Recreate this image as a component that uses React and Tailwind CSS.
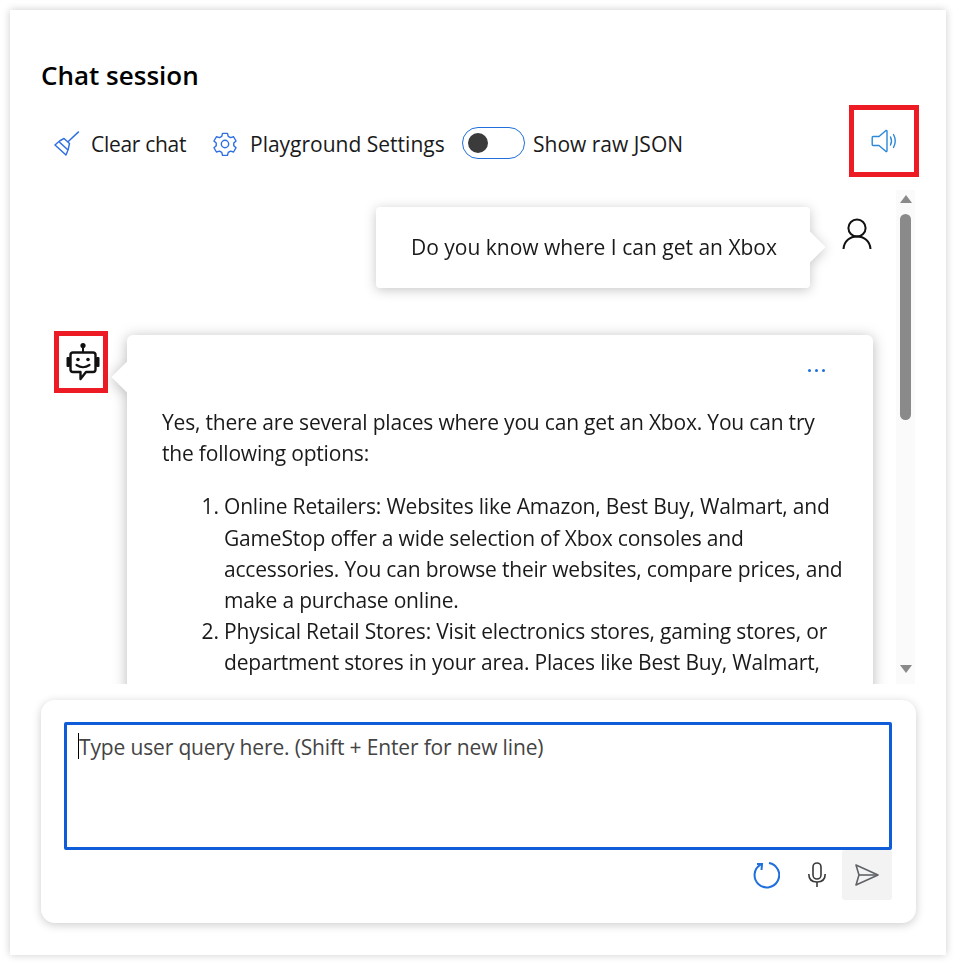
import React from 'react'

const Broom = () => (
  <svg width="26" height="26" viewBox="0 0 26 26" fill="none" stroke="#2f6fe0" strokeWidth="1.5">
    <path d="M24.8 0.6 L14 10.8" />
    <path d="M1 14 Q5 9.5 10 7.5 L15.5 12.5 Q14.5 19 12 24 Z" strokeLinejoin="round" />
    <path d="M5 10.8 L14 19" />
  </svg>
)

const Gear = () => (
  <svg width="26" height="26" viewBox="0 0 24 24" fill="none" stroke="#2f6fe0" strokeWidth="1.3" strokeLinejoin="round">
    <path d="M9.7 2.6 h4.6 l.7 2.8 2.1 1.2 2.8-.8 2.3 4-2.1 2 v2.4 l2.1 2-2.3 4-2.8-.8-2.1 1.2-.7 2.8 H9.7 l-.7-2.8-2.1-1.2-2.8.8-2.3-4 2.1-2 v-2.4 l-2.1-2 2.3-4 2.8.8 2.1-1.2 Z" transform="translate(0 -.4) scale(1 .98)" />
    <circle cx="12" cy="12" r="3.4" />
  </svg>
)

const Speaker = () => (
  <svg width="28" height="28" viewBox="0 0 28 28" fill="none" stroke="#2b88d8" strokeWidth="1.4" strokeLinejoin="round" strokeLinecap="round">
    <path d="M2 9.5 H8 L15 3.5 Q16 3.2 16 4.5 V23.5 Q16 24.8 15 24.5 L8 18.5 H2 Q1.2 18.5 1.2 17.5 V10.5 Q1.2 9.5 2 9.5 Z" />
    <path d="M19.5 10 Q21.5 14 19.5 18" />
    <path d="M22.5 7.5 Q26 14 22.5 20.5" />
  </svg>
)

const Person = () => (
  <svg width="30" height="32" viewBox="0 0 30 32" fill="none" stroke="#111" strokeWidth="2">
    <circle cx="15" cy="10" r="8.6" />
    <path d="M1.5 31 C2 23 8 18.6 15 18.6 C22 18.6 28 23 28.5 31" />
  </svg>
)

const Bot = () => (
  <svg width="34" height="40" viewBox="0 0 34 40" fill="none">
    <circle cx="17" cy="3.5" r="2.6" fill="#111" />
    <path d="M17 5 V10" stroke="#111" strokeWidth="2" />
    <rect x="0.5" y="15" width="3.5" height="10" rx="1" fill="#111" />
    <rect x="30" y="15" width="3.5" height="10" rx="1" fill="#111" />
    <path d="M7 10.5 H27 Q29.5 10.5 29.5 13 V27.5 Q29.5 30 27 30 H20 L14.5 37 V30 H7 Q4.5 30 4.5 27.5 V13 Q4.5 10.5 7 10.5 Z" fill="#fff" stroke="#111" strokeWidth="2.4" strokeLinejoin="round" />
    <circle cx="12" cy="17.5" r="1.8" fill="#111" />
    <circle cx="22" cy="17.5" r="1.8" fill="#111" />
    <path d="M10.5 23 Q17 27.5 23.5 23" stroke="#111" strokeWidth="2.2" strokeLinecap="round" />
  </svg>
)

const Refresh = () => (
  <svg width="28" height="28" viewBox="0 0 28 28" fill="none" stroke="#1f6fdc" strokeWidth="2">
    <path d="M8.5 3.6 A12.3 12.3 0 1 0 17 2" />
    <path d="M5 3 L10 3 L9.5 9" />
  </svg>
)

const Mic = () => (
  <svg width="20" height="26" viewBox="0 0 20 26" fill="none" stroke="#3a3a3a" strokeWidth="1.6">
    <rect x="6" y="1" width="8" height="16" rx="4" />
    <path d="M1.8 12 C1.8 17.5 5 20 10 20 C15 20 18.2 17.5 18.2 12" />
    <path d="M10 20 V25" />
  </svg>
)

const Send = () => (
  <svg width="24" height="22" viewBox="0 0 24 22" fill="none" stroke="#5f6368" strokeWidth="1.6" strokeLinejoin="round">
    <path d="M1 1 L23 11 L1 21 L4 11 Z" />
    <path d="M4 11 H23" />
  </svg>
)

const App = () => {
  return (
    <div className="w-[955px] h-[967px] bg-white pt-[10px] pl-[10px] font-['Open_Sans',sans-serif] text-[#1a1a1a]">
      <div className="w-[936px] h-[945px] bg-white shadow-[0_0_8px_rgba(0,0,0,0.2)] flex flex-col overflow-hidden">
        <h1 className="pl-[31px] mt-[48px] h-[34px] text-[26px] leading-[34px] font-semibold text-black">Chat session</h1>

        {/* toolbar */}
        <div className="mt-[13px] h-[72px] pl-[44px] pr-[27px] flex items-start text-[21px]">
          <div className="flex items-center h-[32px] mt-[22px]">
            <span className="flex mt-[2px]"><Broom /></span>
            <span className="ml-[11px] pt-[4px] w-[96px] tracking-[-0.3px] whitespace-nowrap">Clear chat</span>
            <span className="ml-[25px] flex mt-[2px]"><Gear /></span>
            <span className="ml-[12px] pt-[4px] w-[194px] whitespace-nowrap">Playground Settings</span>
            <div className="ml-[18px] w-[63px] h-[32px] rounded-full border border-[#1f6fdc] flex items-center pl-[5px]">
              <div className="w-[20px] h-[20px] rounded-full bg-[#3b3b3b]" />
            </div>
            <span className="ml-[8px] pt-[4px] whitespace-nowrap">Show raw JSON</span>
          </div>
          <div className="ml-auto w-[70px] h-[72px] border-[5px] border-[#ed1c24] pl-[1px] flex items-center justify-center">
            <Speaker />
          </div>
        </div>

        {/* messages */}
        <div className="mt-[13px] h-[494px] flex overflow-hidden">
          <div className="w-[886px] pt-[17px] overflow-hidden shrink-0">
            <div className="flex justify-end pr-[24px]">
              <div className="relative w-[434px] h-[81px] bg-white rounded-[4px] drop-shadow-[0_2px_6px_rgba(0,0,0,0.22)] flex items-center pl-[35px] text-[21px]">
                Do you know where I can get an Xbox
                <div className="absolute right-[-11px] top-[29px] w-[22px] h-[22px] rotate-45 bg-white" />
              </div>
              <div className="ml-[32px] mt-[11px] w-[30px]"><Person /></div>
            </div>

            <div className="flex mt-[47px] pl-[44px]">
              <div className="w-[54px] h-[62px] border-[5px] border-[#ed1c24] flex items-center justify-center mt-[-4px] pl-[3px] shrink-0">
                <Bot />
              </div>
              <div className="relative ml-[19px] w-[746px] h-[600px] bg-white rounded-[6px] drop-shadow-[0_2px_7px_rgba(0,0,0,0.28)] pl-[35px] pr-[28px] text-[21px] leading-[31.2px] tracking-[-0.19px]">
                <div className="absolute left-[-11px] top-[31px] w-[22px] h-[22px] rotate-45 bg-white" />
                <div className="relative h-[72px] flex justify-end items-center pr-[20px]">
                  <div className="flex gap-[4px] mb-[2px]">
                    <span className="w-[3px] h-[3px] rounded-full bg-[#1f6fdc]" />
                    <span className="w-[3px] h-[3px] rounded-full bg-[#1f6fdc]" />
                    <span className="w-[3px] h-[3px] rounded-full bg-[#1f6fdc]" />
                  </div>
                </div>
                <p className="pr-[7px]">Yes, there are several places where you can get an Xbox. You can try the following options:</p>
                <ol className="mt-[22px] pl-[62px] list-decimal">
                  <li>Online Retailers: Websites like Amazon, Best Buy, Walmart, and GameStop offer a wide selection of Xbox consoles and accessories. You can browse their websites, compare prices, and make a purchase online.</li>
                  <li>Physical Retail Stores: Visit electronics stores, gaming stores, or department stores in your area. Places like Best Buy, Walmart,</li>
                </ol>
              </div>
            </div>
          </div>

          {/* scrollbar */}
          <div className="w-[19px] h-[494px] bg-[#fafafa] flex flex-col items-center pt-[5px]">
            <div className="w-0 h-0 border-x-[6px] border-x-transparent border-b-[8px] border-b-[#8a8a8a]" />
            <div className="mt-[11px] w-[11px] h-[206px] rounded-full bg-[#8a8a8a]" />
            <div className="mt-[245px] w-0 h-0 border-x-[6px] border-x-transparent border-t-[8px] border-t-[#8a8a8a]" />
          </div>
        </div>

        {/* input card */}
        <div className="mt-[16px] ml-[31px] w-[875px] h-[223px] bg-white rounded-[14px] shadow-[0_2px_10px_rgba(0,0,0,0.2)] pt-[22px] pl-[23px] shrink-0">
          <div className="h-[128px] w-[828px] border-[3px] border-[#0f5cd8] rounded-[2px] pl-[11px] pt-[8px] flex text-[21px] leading-[28px] tracking-[-0.15px] text-[#444]">
            <span className="w-[1px] h-[26px] bg-black" />
            Type user query here. (Shift + Enter for new line)
          </div>
          <div className="flex justify-end items-center h-[50px] w-[828px]">
            <Refresh />
            <span className="ml-[27px] mr-[15px] flex"><Mic /></span>
            <div className="w-[50px] h-[50px] bg-[#f3f3f3] rounded-[3px] flex items-center justify-center"><Send /></div>
          </div>
        </div>
      </div>
    </div>
  )
}

export default App
